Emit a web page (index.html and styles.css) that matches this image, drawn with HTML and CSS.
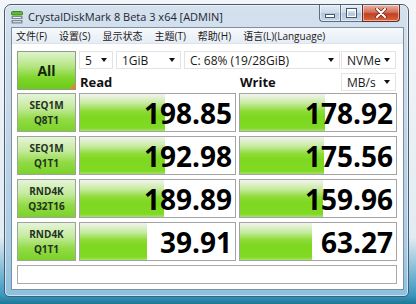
FILE: index.html
```html
<!DOCTYPE html>
<html lang="zh-CN">
<head>
  <meta charset="UTF-8">
  <title>CrystalDiskMark 8 Beta 3 x64 [ADMIN]</title>
  <link rel="stylesheet" href="styles.css">
</head>
<body>

  <div class="window">
    <div class="titlebar">
      <svg class="app-icon" width="12" height="13" viewBox="0 0 12 13">
        <rect x="0.5" y="0.5" width="11" height="3.5" rx="1" fill="#5dbb2c" stroke="#3d8a1c" stroke-width="1"/>
        <rect x="0.5" y="5" width="11" height="3" rx="0.5" fill="#7d8b98"/>
        <rect x="2" y="6" width="8" height="1" fill="#e8eef2"/>
        <rect x="0.5" y="9" width="11" height="3.5" rx="0.5" fill="#7d8b98"/>
        <rect x="2" y="10.2" width="8" height="1" fill="#e8eef2"/>
      </svg>
      <span class="title">CrystalDiskMark 8 Beta 3 x64 [ADMIN]</span>
      <div class="caption-buttons">
        <div class="cap cap-min"><span class="min-glyph"></span></div>
        <div class="cap cap-max"><span class="max-glyph"></span></div>
        <div class="cap cap-close">
          <svg width="12" height="10" viewBox="0 0 12 10">
            <path d="M2 1 L10 9 M10 1 L2 9" stroke="#7a2a1c" stroke-width="3.6" stroke-linecap="round"/>
            <path d="M2 1 L10 9 M10 1 L2 9" stroke="#ffffff" stroke-width="2" stroke-linecap="round"/>
          </svg>
        </div>
      </div>
    </div>

    <div class="client">
      <div class="menubar">
        <span>文件(F)</span>
        <span>设置(S)</span>
        <span>显示状态</span>
        <span>主题(T)</span>
        <span>帮助(H)</span>
        <span>语言(L)(Language)</span>
      </div>

      <div class="panel">
        <div class="header">
          <div class="all-btn">All</div>
          <div class="combos">
            <div class="combo combo-count">5<span class="arrow"></span></div>
            <div class="combo combo-size">1GiB<span class="arrow"></span></div>
            <div class="combo combo-drive">C: 68% (19/28GiB)<span class="arrow"></span></div>
            <div class="combo combo-mode">NVMe<span class="arrow"></span></div>
          </div>
          <div class="col-title">Read</div>
          <div class="col-title write-title">
            Write
            <div class="combo combo-unit">MB/s<span class="arrow"></span></div>
          </div>
        </div>

        <div class="results">
          <div class="test-btn">SEQ1M<br>Q8T1</div>
          <div class="meter" style="--w: 85px">198.85</div>
          <div class="meter" style="--w: 85px">178.92</div>

          <div class="test-btn">SEQ1M<br>Q1T1</div>
          <div class="meter" style="--w: 85px">192.98</div>
          <div class="meter" style="--w: 84px">175.56</div>

          <div class="test-btn">RND4K<br>Q32T16</div>
          <div class="meter" style="--w: 84px">189.89</div>
          <div class="meter" style="--w: 83px">159.96</div>

          <div class="test-btn">RND4K<br>Q1T1</div>
          <div class="meter" style="--w: 67px">39.91</div>
          <div class="meter" style="--w: 72px">63.27</div>
        </div>

        <div class="comment"></div>
      </div>
    </div>
  </div>

</body>
</html>
```

FILE: styles.css
```css
body {
  margin: 0;
  height: 304px;
  overflow: hidden;
  font-family: "Open Sans", "Noto Sans CJK SC", sans-serif;
  background: linear-gradient(#f3f6f9 0%, #e2ecf3 78%, #3b97c0 97%, #1d7796 100%);
}

.window {
  box-sizing: border-box;
  width: 405px;
  height: 293px;
  margin: 4px 0 0 4px;
  padding: 0 4px 6px 6px;
  display: flex;
  flex-direction: column;
  border: 1px solid #4a5c6f;
  border-radius: 7px 7px 5px 5px;
  background: linear-gradient(#d5e1ed, #c4d6e8 40%, #a9cce5 82%, #8cc0e0);
  box-shadow: inset 0 0 0 1px rgba(255,255,255,0.55);
}

/* title bar */

.titlebar {
  height: 22px;
  display: flex;
  align-items: center;
}

.app-icon {
  margin: 3px 0 0 0;
}

.title {
  margin-left: 5px;
  font-size: 11px;
  color: #1b2633;
  white-space: nowrap;
}

.caption-buttons {
  margin-left: auto;
  align-self: flex-start;
  display: flex;
  height: 17px;
}

.cap {
  box-sizing: border-box;
  height: 17px;
  display: flex;
  align-items: center;
  justify-content: center;
  border: 1px solid #5b6e84;
  border-top: none;
  box-shadow: inset 0 0 0 1px rgba(255,255,255,0.5);
}

.cap-min {
  width: 21px;
  border-radius: 0 0 0 4px;
  border-right: none;
  background: linear-gradient(#e4ecf5, #cbd9e8 48%, #b3c7dc 52%, #c6d7e9);
}

.cap-max {
  width: 22px;
  border-right: none;
  background: linear-gradient(#e4ecf5, #cbd9e8 48%, #b3c7dc 52%, #c6d7e9);
}

.cap-close {
  width: 38px;
  margin-right: 4px;
  border-radius: 0 0 4px 0;
  border-color: #6b2a20;
  background: linear-gradient(#eab3a4, #d4705a 45%, #c2401f 55%, #d9653f);
}

.min-glyph {
  width: 8px;
  height: 2px;
  margin-top: 6px;
  background: #fff;
  border: 1px solid #47576a;
}

.max-glyph {
  width: 7px;
  height: 5px;
  border: 1px solid #fff;
  border-top-width: 2px;
  outline: 1px solid #47576a;
}

/* client area */

.client {
  flex: 1;
  display: flex;
  flex-direction: column;
  border: 1px solid #7c8fa3;
  background: #fff;
}

.menubar {
  height: 16px;
  display: flex;
  align-items: center;
  padding-left: 4px;
  font-size: 10px;
  color: #1a1a1a;
  background: linear-gradient(#f7f9fc, #e7edf5);
  border-bottom: 1px solid #dde3ea;
  box-sizing: border-box;
}

.menubar span {
  margin-right: 12px;
}

.panel {
  padding: 7px 6px 0 5px;
}

.header,
.results {
  display: grid;
  grid-template-columns: 59px 157px 158px;
  column-gap: 3px;
}

.header {
  grid-template-rows: 18px 18px;
  row-gap: 4px;
}

.all-btn {
  grid-row: 1 / 3;
  position: relative;
  box-sizing: border-box;
  height: 39px;
  display: flex;
  align-items: center;
  justify-content: center;
  font-size: 14px;
  font-weight: bold;
  color: #15240c;
  border: 1px solid #8f9e8a;
  background: linear-gradient(#dff3cd, #b3e57f 40%, #7fd52c 70%, #6ccb18);
}

.all-btn::after {
  content: "";
  position: absolute;
  right: 0;
  bottom: 0;
  border-left: 6px solid transparent;
  border-bottom: 6px solid #ee8420;
}

.combos {
  grid-column: 2 / 4;
  display: flex;
}

.combo {
  box-sizing: border-box;
  height: 18px;
  display: flex;
  align-items: center;
  padding: 0 5px 0 5px;
  font-size: 12px;
  color: #1a1a1a;
  background: #fff;
  border: 1px solid #e3e3e3;
  white-space: nowrap;
}

.arrow {
  margin-left: auto;
  border-top: 4px solid #111;
  border-left: 3.5px solid transparent;
  border-right: 3.5px solid transparent;
}

.combo-count { width: 34px; }
.combo-size  { width: 65px; margin-left: 3px; }
.combo-drive { width: 156px; margin-left: 3px; }
.combo-mode  { width: 55px; margin-left: 1px; }
.combo-unit  { width: 55px; margin-left: auto; margin-right: 1px; font-weight: normal; }

.col-title {
  display: flex;
  align-items: center;
  padding-left: 1px;
  font-size: 13px;
  font-weight: bold;
  color: #111;
}

/* results */

.results {
  margin-top: 2px;
  grid-auto-rows: 39px;
  row-gap: 4px;
}

.test-btn {
  box-sizing: border-box;
  display: flex;
  align-items: center;
  justify-content: center;
  text-align: center;
  padding-top: 1px;
  font-size: 10px;
  line-height: 15px;
  font-weight: bold;
  color: #23331e;
  border: 1px solid #9aa796;
  background: linear-gradient(#e6f4da, #c3ea9b 38%, #92db46 68%, #7cd22a);
}

.meter {
  box-sizing: border-box;
  padding: 2px 3px 0 0;
  text-align: right;
  font-size: 28px;
  line-height: 35px;
  font-weight: bold;
  color: #000;
  border: 1px solid #a4a4a4;
  background:
    linear-gradient(#f1f4ef, #c6eb9f 25%, #8fdc3a 45%, #7ed81f 60%, #80d923 92%, #a6e36a)
    0 0 / var(--w) 100% no-repeat,
    #fff;
}

.comment {
  box-sizing: border-box;
  width: 380px;
  height: 19px;
  margin-top: 4px;
  border: 1px solid #a9a9a9;
  background: #fff;
}
```
